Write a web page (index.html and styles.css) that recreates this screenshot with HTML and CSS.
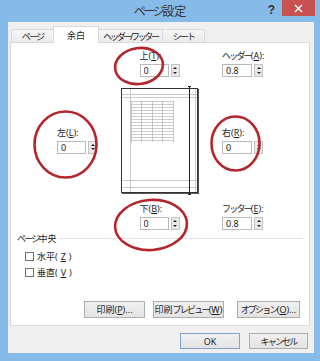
FILE: index.html
```html
<!DOCTYPE html>
<html lang="ja">
<head>
    <meta charset="UTF-8">
    <meta name="viewport" content="width=device-width, initial-scale=1.0">
    <title>ページ設定</title>
    <link rel="stylesheet" href="styles.css">
</head>
<body>
<div class="window">
    <div class="titlebar">
        <span class="title"><span class="kana">ページ</span>設定</span>
        <div class="controls">
            <span class="help">?</span>
            <span class="close">
                <svg width="9" height="9" viewBox="0 0 9 9"><path d="M1 1 L8 8 M8 1 L1 8" stroke="#fff" stroke-width="1.4"/></svg>
            </span>
        </div>
    </div>

    <div class="client">
        <div class="tabs">
            <div class="tab tab-page"><span class="kana">ページ</span></div>
            <div class="tab tab-margin active">余白</div>
            <div class="tab tab-header"><span class="kana narrow">ヘッダー/フッター</span></div>
            <div class="tab tab-sheet"><span class="kana">シート</span></div>
        </div>

        <div class="panel">
            <div class="margins">
                <div class="field f-top">
                    <label>上(<u>T</u>):</label>
                    <div class="spinbox"><input class="value" type="text" value="0"><span class="spin"></span></div>
                </div>
                <div class="field f-header">
                    <label><span class="kana">ヘッダー</span>(<u>A</u>):</label>
                    <div class="spinbox"><input class="value wide" type="text" value="0.8"><span class="spin"></span></div>
                </div>
                <div class="field f-left">
                    <label>左(<u>L</u>):</label>
                    <div class="spinbox"><input class="value" type="text" value="0"><span class="spin"></span></div>
                </div>

                <svg class="preview" width="80" height="110" viewBox="0 0 80 110">
                    <rect x="0.5" y="2.5" width="76" height="104" fill="#fff" stroke="#333"/>
                    <path d="M77.5 3 V107.5 M1 107.5 H78" stroke="#555"/>
                    <g stroke="#c9c9c9">
                        <path d="M9.5 3 V106 M74.5 3 V106 M1 8.5 H76 M1 11.5 H76 M1 94.5 H76 M1 101.5 H76"/>
                    </g>
                    <g stroke="#a9a9a9" stroke-width="0.6">
                        <path d="M10.5 15 V56 M20.5 15 V56 M31.5 15 V56 M41.5 15 V56 M52.5 15 V56"/>
                        <path d="M10 15.5 H53 M10 18.5 H53 M10 21.5 H53 M10 24.5 H53 M10 27.5 H53 M10 30.5 H53 M10 33.5 H53 M10 36.5 H53 M10 39.5 H53 M10 42.5 H53 M10 45.5 H53 M10 48.5 H53 M10 51.5 H53 M10 54.5 H53"/>
                    </g>
                    <path d="M68.5 0 V109 M67 0.5 H70 M67 108.5 H70" stroke="#222"/>
                </svg>

                <div class="field f-right">
                    <label>右(<u>R</u>):</label>
                    <div class="spinbox"><input class="value wide" type="text" value="0"><span class="spin"></span></div>
                </div>
                <div class="field f-bottom">
                    <label>下(<u>B</u>):</label>
                    <div class="spinbox"><input class="value" type="text" value="0"><span class="spin"></span></div>
                </div>
                <div class="field f-footer">
                    <label><span class="kana">フッター</span>(<u>E</u>):</label>
                    <div class="spinbox"><input class="value wide" type="text" value="0.8"><span class="spin"></span></div>
                </div>
            </div>

            <div class="center-section">
                <div class="section-title"><span><span class="kana">ページ</span>中央</span></div>
                <div class="checks">
                    <div class="check"><span class="box"></span>水平(<u>Z</u>)</div>
                    <div class="check"><span class="box"></span>垂直(<u>V</u>)</div>
                </div>
            </div>

            <div class="panel-buttons">
                <button class="btn btn-print">印刷(<u>P</u>)...</button>
                <button class="btn btn-preview">印刷<span class="kana">プレビュー</span>(<u>W</u>)</button>
                <button class="btn btn-options"><span class="kana">オプション</span>(<u>O</u>)...</button>
            </div>
        </div>

        <div class="dialog-buttons">
            <button class="btn btn-ok">OK</button>
            <button class="btn btn-cancel"><span class="kana">キャンセル</span></button>
        </div>
    </div>

    <!-- red hand-drawn marks over the dialog -->
    <svg class="marks" width="320" height="361" viewBox="0 0 320 361">
        <g fill="none" stroke="#b3262d" stroke-width="2.6">
            <ellipse cx="139" cy="66" rx="24" ry="18" transform="rotate(-8 139 66)"/>
            <ellipse cx="65.5" cy="144.5" rx="31" ry="33"/>
            <ellipse cx="235.5" cy="143.5" rx="24" ry="27"/>
            <ellipse cx="151" cy="225" rx="36" ry="25" transform="rotate(-4 151 225)"/>
        </g>
    </svg>
</div>
</body>
</html>
```

FILE: styles.css
```css
* {
    box-sizing: border-box;
}
body {
    margin: 0;
    font-family: "Noto Sans", "Noto Sans CJK JP", sans-serif;
    font-size: 9px;
    color: #1e1e1e;
    white-space: nowrap;
}
.kana {
    letter-spacing: -0.2em;
}
.kana.narrow {
    letter-spacing: -0.26em;
}
.window {
    position: relative;
    width: 320px;
    height: 361px;
    background: #86bbe9;
    overflow: hidden;
}
.titlebar {
    height: 22px;
    display: grid;
    grid-template-columns: 1fr auto 1fr;
}
.title {
    grid-column: 2;
    font-size: 12px;
    line-height: 14px;
    padding-top: 5px;
    color: #333;
}
.controls {
    grid-column: 3;
    justify-self: end;
    display: flex;
    align-items: flex-start;
    margin-right: 5px;
}
.help {
    font-family: "Liberation Sans", sans-serif;
    font-size: 12px;
    font-weight: bold;
    line-height: 14px;
    padding-top: 3px;
    margin-right: 7px;
    color: #333;
}
.close {
    width: 33px;
    height: 16px;
    background: #c75050;
    display: flex;
    align-items: center;
    justify-content: center;
}
.client {
    margin: 0 6px 0 8px;
    height: 331px;
    background: #f0f0f0;
    padding: 4px 4px 0 2px;
}
.tabs {
    display: flex;
    align-items: flex-end;
    height: 16px;
    padding-left: 1px;
    position: relative;
    z-index: 1;
}
.tab {
    height: 13px;
    border: 1px solid #d9d9d9;
    border-bottom: none;
    background: linear-gradient(#f5f5f5, #ebebeb);
    margin-right: -1px;
    display: flex;
    align-items: center;
    justify-content: center;
    line-height: 11px;
}
.tab.active {
    height: 17px;
    background: #fff;
    margin-bottom: -1px;
}
.tab-page { width: 43px; }
.tab-margin { width: 46px; }
.tab-header { width: 65px; }
.tab-sheet { width: 43px; }
.panel {
    height: 284px;
    background: #fff;
    border: 1px solid #d9d9d9;
    display: flex;
    flex-direction: column;
}
.margins {
    display: grid;
    grid-template-columns: 64px 77px 24px 1fr;
    padding: 7px 0 0 46px;
}
.field {
    display: flex;
    flex-direction: column;
    gap: 3px;
}
.field label {
    line-height: 11px;
}
.spinbox {
    display: flex;
    gap: 2px;
}
.value {
    width: 29px;
    height: 13px;
    margin: 0;
    border: 1px solid #b9b9b9;
    padding: 0 3px;
    font: inherit;
    line-height: 11px;
    color: #222;
    background: #fff;
}
.value.wide {
    width: 30px;
}
.spin {
    width: 9px;
    height: 13px;
    border: 1px solid #c3c3c3;
    background: #e9e9e9;
    display: flex;
    flex-direction: column;
    align-items: center;
    justify-content: space-around;
    padding: 1px 0;
}
.spin::before,
.spin::after {
    content: "";
    border-left: 2px solid transparent;
    border-right: 2px solid transparent;
}
.spin::before {
    border-bottom: 2px solid #222;
}
.spin::after {
    border-top: 2px solid #222;
}
.f-top { grid-column: 2; grid-row: 1; justify-self: center; }
.f-header { grid-column: 4; grid-row: 1; }
.f-left { grid-column: 1; grid-row: 2; align-self: center; }
.preview { grid-column: 2 / 4; grid-row: 2; margin: 9px 0 7px; }
.f-right { grid-column: 4; grid-row: 2; align-self: center; }
.f-bottom { grid-column: 2; grid-row: 3; justify-self: center; }
.f-footer { grid-column: 4; grid-row: 3; }
.center-section {
    padding: 3px 6px 0 6px;
}
.section-title {
    display: flex;
    align-items: center;
    gap: 4px;
    line-height: 11px;
}
.section-title::after {
    content: "";
    flex: 1;
    border-top: 1px solid #e3e3e3;
}
.checks {
    padding: 4px 0 0 8px;
}
.check {
    display: flex;
    align-items: center;
    gap: 3px;
    height: 16px;
}
.box {
    width: 9px;
    height: 9px;
    border: 1px solid #707070;
    background: #fff;
}
.panel-buttons {
    margin-top: auto;
    display: flex;
    justify-content: flex-end;
    gap: 8px;
    padding: 0 9px 7px 0;
}
.btn {
    height: 17px;
    margin: 0;
    padding: 0;
    border: 1px solid #adadad;
    background: linear-gradient(#f0f0f0, #e3e3e3);
    font: inherit;
    color: #1e1e1e;
    line-height: 11px;
}
.btn-print { width: 61px; }
.btn-preview { width: 71px; }
.btn-options { width: 63px; margin-left: 5px; }
.dialog-buttons {
    display: flex;
    justify-content: flex-end;
    gap: 9px;
    margin: 7px 2px 0 0;
}
.dialog-buttons .btn {
    height: 16px;
}
.btn-ok {
    width: 60px;
    border-color: #7fa5cc;
}
.btn-cancel {
    width: 59px;
}
.marks {
    position: absolute;
    left: 0;
    top: 0;
    pointer-events: none;
}
```
